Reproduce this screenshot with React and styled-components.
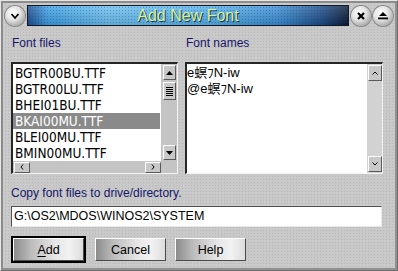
import React from 'react';
import styled, { createGlobalStyle } from 'styled-components';

const GlobalStyle = createGlobalStyle`
  html, body {
    margin: 0;
    padding: 0;
    background: #c8c8c8;
  }
  * {
    box-sizing: border-box;
  }
`;

const files = [
  'BGTR00BU.TTF',
  'BGTR00LU.TTF',
  'BHEI01BU.TTF',
  'BKAI00MU.TTF',
  'BLEI00MU.TTF',
  'BMIN00MU.TTF',
];

const names = ['e螟ﾌN-iw', '@e螟ﾌN-iw'];

export default function App() {
  return (
    <>
      <GlobalStyle />
      <Frame>
        <TitleRow>
          <CircleBtn>
            <svg width="10" height="10" viewBox="0 0 10 10">
              <polyline points="1.5,3 5,7 8.5,3" fill="none" stroke="#000" strokeWidth="1.8" />
            </svg>
          </CircleBtn>
          <TitleBar>Add New Font</TitleBar>
          <CircleBtn>
            <svg width="10" height="10" viewBox="0 0 10 10">
              <path d="M2 2 L8 8 M8 2 L2 8" stroke="#000" strokeWidth="2.2" />
            </svg>
          </CircleBtn>
          <CircleBtn>
            <svg width="12" height="10" viewBox="0 0 12 10">
              <polygon points="6,1 10,5 2,5" fill="#000" />
              <rect x="1" y="6.5" width="10" height="1.8" fill="#000" />
            </svg>
          </CircleBtn>
        </TitleRow>

        <Body>
          <Columns>
            <Label>Font files</Label>
            <Label>Font names</Label>

            <ListFrame>
              <ListGrid>
                <Items>
                  {files.map((f, i) => (
                    <Item key={f} $selected={i === 3}>{f}</Item>
                  ))}
                </Items>
                <VTrack>
                  <ArrowBtn $size={13}>
                    <svg width="7" height="4" viewBox="0 0 7 4"><polygon points="3.5,0 7,4 0,4" fill="#000" /></svg>
                  </ArrowBtn>
                  <Thumb>
                    <Grip />
                  </Thumb>
                  <Spacer />
                  <ArrowBtn $size={13}>
                    <svg width="7" height="4" viewBox="0 0 7 4"><polygon points="0,0 7,0 3.5,4" fill="#000" /></svg>
                  </ArrowBtn>
                </VTrack>
                <HTrack>
                  <HArrowBtn>
                    <svg width="4" height="6" viewBox="0 0 4 6"><polyline points="3,0.5 1,3 3,5.5" fill="none" stroke="#000" strokeWidth="1" /></svg>
                  </HArrowBtn>
                  <Spacer />
                  <HArrowBtn>
                    <svg width="4" height="6" viewBox="0 0 4 6"><polyline points="1,0.5 3,3 1,5.5" fill="none" stroke="#000" strokeWidth="1" /></svg>
                  </HArrowBtn>
                </HTrack>
                <Corner />
              </ListGrid>
            </ListFrame>

            <ListFrame>
              <NameGrid>
                <Items>
                  {names.map((n) => (
                    <NameItem key={n}>{n}</NameItem>
                  ))}
                </Items>
                <VTrack $light>
                  <ArrowBtn $size={14}>
                    <svg width="6" height="4" viewBox="0 0 6 4"><polyline points="0.5,3.5 3,1 5.5,3.5" fill="none" stroke="#000" strokeWidth="1" /></svg>
                  </ArrowBtn>
                  <Spacer />
                  <ArrowBtn $size={14}>
                    <svg width="6" height="4" viewBox="0 0 6 4"><polyline points="0.5,0.5 3,3 5.5,0.5" fill="none" stroke="#000" strokeWidth="1" /></svg>
                  </ArrowBtn>
                </VTrack>
              </NameGrid>
            </ListFrame>
          </Columns>

          <CopyLabel>Copy font files to drive/directory.</CopyLabel>
          <PathInput>G:\OS2\MDOS\WINOS2\SYSTEM</PathInput>

          <ButtonRow>
            <DefaultRing>
              <PushBtn><u>A</u>dd</PushBtn>
            </DefaultRing>
            <PushBtn>Cancel</PushBtn>
            <PushBtn>Help</PushBtn>
          </ButtonRow>
        </Body>
      </Frame>
    </>
  );
}

const stipple = `
  background-color: #c8c8c8;
  background-image:
    radial-gradient(#b8b8b8 0.55px, transparent 0.75px),
    radial-gradient(#d8d8d8 0.55px, transparent 0.75px);
  background-size: 3px 3px, 4px 4px;
  background-position: 0 0, 1px 2px;
`;

const Frame = styled.div`
  width: 398px;
  height: 271px;
  ${stipple}
  border: 1px solid #e6e6e6;
  border-right-color: #6e6e6e;
  border-bottom-color: #6e6e6e;
  box-shadow: inset 2px 2px 0 #8c8c8c, inset -2px -2px 0 #909090;
  padding: 4px 4px 0 4px;
  font-family: 'Liberation Sans', Arial, sans-serif;
`;

const TitleRow = styled.div`
  display: flex;
  align-items: center;
  gap: 2px;
  height: 21px;
`;

const CircleBtn = styled.div`
  width: 20px;
  height: 20px;
  flex: none;
  border-radius: 50%;
  display: flex;
  align-items: center;
  justify-content: center;
  background: radial-gradient(circle at 40% 35%, #ffffff 0%, #e4e4e4 40%, #9a9a9a 85%, #6a6a6a 100%);
  box-shadow: 0 0 0 1px #8a8a8a;
`;

const TitleBar = styled.div`
  flex: 1;
  height: 21px;
  border: 1px solid #101828;
  background:
    radial-gradient(rgba(20, 60, 120, 0.35) 0.6px, transparent 0.8px) 0 0 / 3px 3px,
    linear-gradient(to bottom, rgba(255, 255, 255, 0.18), rgba(0, 0, 0, 0.12)),
    linear-gradient(to right, #1c4f92 0%, #3c9ee4 6%, #6cc0f0 25%, #58b2ea 55%, #3a8ed4 78%, #1c4a86 92%, #0a1a34 100%);
  color: #d6f09a;
  font-size: 16px;
  line-height: 19px;
  text-align: center;
  text-shadow: 1px 1px 0 #1a3450;
  white-space: nowrap;
`;

const Body = styled.div`
  padding: 0 6px 0 6px;
`;

const Columns = styled.div`
  display: grid;
  grid-template-columns: 167px 198px;
  column-gap: 7px;
  margin-top: 10px;
`;

const Label = styled.div`
  font-size: 12px;
  line-height: 14px;
  color: #16166a;
  padding-left: 1px;
  margin-bottom: 12px;
`;

const ListFrame = styled.div`
  height: 112px;
  border-top: 2px solid #262626;
  border-left: 2px solid #262626;
  border-right: 1px solid #f4f4f4;
  border-bottom: 1px solid #f4f4f4;
`;

const ListGrid = styled.div`
  display: grid;
  grid-template-columns: 1fr 16px;
  grid-template-rows: 1fr 12px;
  height: 100%;
`;

const NameGrid = styled.div`
  display: grid;
  grid-template-columns: 1fr 16px;
  height: 100%;
`;

const Items = styled.div`
  background: #ffffff;
  padding-top: 1px;
  overflow: hidden;
`;

const Item = styled.div`
  height: 16px;
  line-height: 16px;
  padding-left: 2px;
  margin-right: 1px;
  font-family: 'Liberation Sans Narrow', 'DejaVu Sans Condensed', sans-serif;
  font-size: 13.5px;
  white-space: nowrap;
  color: ${(p) => (p.$selected ? '#ffffff' : '#000000')};
  background: ${(p) => (p.$selected ? '#8a8a8a' : 'transparent')};
`;

const NameItem = styled.div`
  height: 16px;
  line-height: 16px;
  font-family: 'Liberation Sans', 'Noto Sans CJK JP', sans-serif;
  font-size: 13px;
  white-space: nowrap;
  color: #000;
`;

const VTrack = styled.div`
  display: flex;
  flex-direction: column;
  align-items: center;
  padding: 1px 0;
  background: ${(p) => (p.$light ? '#d2d2d2' : '#c4c4c4')};
  border-left: 1px solid ${(p) => (p.$light ? '#ffffff' : '#c4c4c4')};
`;

const bevel = `
  background: #c8c8c8;
  border-top: 1px solid #ffffff;
  border-left: 1px solid #ffffff;
  border-right: 1px solid #5a5a5a;
  border-bottom: 1px solid #5a5a5a;
  display: flex;
  align-items: center;
  justify-content: center;
`;

const ArrowBtn = styled.div`
  ${bevel}
  width: ${(p) => p.$size}px;
  height: ${(p) => p.$size + 2}px;
  flex: none;
`;

const Thumb = styled.div`
  ${bevel}
  width: 13px;
  height: 18px;
  margin-top: 2px;
  flex: none;
`;

const Grip = styled.div`
  width: 7px;
  height: 9px;
  background: repeating-linear-gradient(to bottom, #000 0 1px, transparent 1px 2px);
`;

const Spacer = styled.div`
  flex: 1;
`;

const HTrack = styled.div`
  display: flex;
  align-items: center;
  padding: 0 0 0 1px;
  background: #c4c4c4;
`;

const HArrowBtn = styled.div`
  ${bevel}
  width: 16px;
  height: 11px;
  flex: none;
`;

const Corner = styled.div`
  background: #c4c4c4;
`;

const CopyLabel = styled.div`
  font-size: 12px;
  line-height: 14px;
  color: #16166a;
  margin-top: 12px;
`;

const PathInput = styled.div`
  margin-top: 6px;
  height: 21px;
  width: 371px;
  background: #ffffff;
  border-top: 1px solid #505050;
  border-left: 1px solid #505050;
  border-right: 1px solid #e8e8e8;
  border-bottom: 1px solid #e8e8e8;
  padding-left: 2px;
  font-size: 12.5px;
  line-height: 19px;
  color: #000;
`;

const ButtonRow = styled.div`
  display: flex;
  align-items: center;
  gap: 9px;
  margin-top: 9px;
`;

const DefaultRing = styled.div`
  border: 2px solid #000;
  display: flex;
`;

const PushBtn = styled.div`
  width: 71px;
  height: 23px;
  display: flex;
  align-items: center;
  justify-content: center;
  font-size: 12.5px;
  color: #000;
  background: linear-gradient(to right, #8c8c8c 0%, #bcbcbc 25%, #e6e6e6 60%, #f2f2f2 80%, #dcdcdc 100%);
  border-top: 1px solid #ffffff;
  border-left: 1px solid #ffffff;
  border-right: 1px solid #4a4a4a;
  border-bottom: 1px solid #4a4a4a;

  u {
    text-decoration: underline;
    text-underline-offset: 2px;
  }
`;
